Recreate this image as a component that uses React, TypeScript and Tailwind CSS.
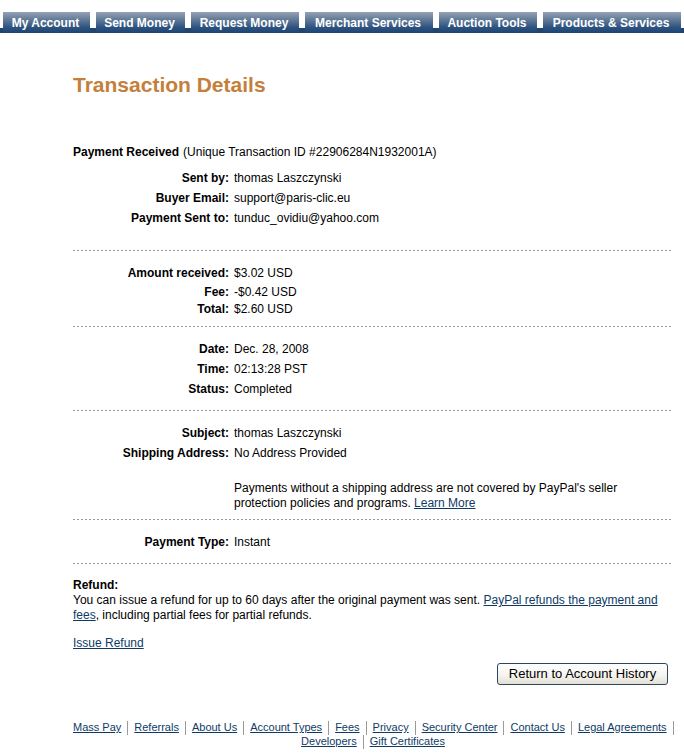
import React from "react";

const tabs = [
  { label: "My Account", w: "w-[87px]" },
  { label: "Send Money", w: "w-[89px]" },
  { label: "Request Money", w: "w-[108px]" },
  { label: "Merchant Services", w: "w-[128px]" },
  { label: "Auction Tools", w: "w-[98px]" },
  { label: "Products & Services", w: "w-[138px]" },
];

const footerLine1 = [
  "Mass Pay",
  "Referrals",
  "About Us",
  "Account Types",
  "Fees",
  "Privacy",
  "Security Center",
  "Contact Us",
  "Legal Agreements",
];
const footerLine2 = ["Developers", "Gift Certificates"];

function Dots() {
  return (
    <div className="h-px w-full bg-[linear-gradient(to_right,#9a9a9a_2px,transparent_2px)] bg-[length:4px_1px] bg-repeat-x" />
  );
}

function Row({ label, value, h = "h-5" }: { label: string; value: React.ReactNode; h?: string }) {
  return (
    <div className={`flex items-center ${h}`}>
      <div className="w-[156px] shrink-0 text-right font-bold">{label}</div>
      <div className="pl-[5px]">{value}</div>
    </div>
  );
}

function Pipe() {
  return <span className="mx-[6px] inline-block h-[14px] w-px bg-[#9a9a9a] align-middle" />;
}

function FLink({ children }: { children: React.ReactNode }) {
  return <a className="text-[#0e3b66] underline">{children}</a>;
}

export default function App() {
  return (
    <div className="min-h-[755px] bg-white text-[12px] text-black font-['Liberation_Sans',Arial,sans-serif]">
      {/* Tab bar */}
      <div className="mt-[12px] flex h-[21px] gap-[6px] pl-[3px] bg-[linear-gradient(to_bottom,transparent_16px,#1f4670_16px)]">
        {tabs.map((t) => (
          <div
            key={t.label}
            className={`${t.w} flex shrink-0 items-center justify-center pr-[2px] text-[12px] font-bold text-white bg-[linear-gradient(to_bottom,#93a3b6_0%,#5d7694_40%,#2a5180_75%,#1f4670_100%)]`}
          >
            {t.label}
          </div>
        ))}
      </div>

      <div className="ml-[73px] w-[600px]">
        <h1 className="mt-[40px] h-[24px] text-[21px] font-bold leading-[24px] text-[#c47f3c]">
          Transaction Details
        </h1>

        <div className="mt-[45px] flex h-5 items-center">
          <span className="font-bold">Payment Received</span>
          <span className="ml-1">(Unique Transaction ID #22906284N1932001A)</span>
        </div>

        <div className="mt-[6px]">
          <Row label="Sent by:" value="thomas Laszczynski" />
          <Row label="Buyer Email:" value="support@paris-clic.eu" />
          <Row label="Payment Sent to:" value="tunduc_ovidiu@yahoo.com" />
        </div>

        <div className="mt-[22px]">
          <Dots />
        </div>

        <div className="mt-[12px]">
          <Row label="Amount received:" value="$3.02 USD" />
          <Row label="Fee:" value="-$0.42 USD" h="h-[18px]" />
          <Row label="Total:" value="$2.60 USD" h="h-4" />
        </div>

        <div className="mt-[9px]">
          <Dots />
        </div>

        <div className="mt-[12px]">
          <Row label="Date:" value="Dec. 28, 2008" />
          <Row label="Time:" value="02:13:28 PST" />
          <Row label="Status:" value="Completed" />
        </div>

        <div className="mt-[11px]">
          <Dots />
        </div>

        <div className="mt-[12px]">
          <Row label="Subject:" value="thomas Laszczynski" />
          <Row label="Shipping Address:" value="No Address Provided" />
        </div>

        <div className="mt-[18px] pl-[161px] leading-[15px]">
          Payments without a shipping address are not covered by PayPal's seller
          <br />
          protection policies and programs. <FLink>Learn More</FLink>
        </div>

        <div className="mt-[8px]">
          <Dots />
        </div>

        <div className="mt-[12px]">
          <Row label="Payment Type:" value="Instant" />
        </div>

        <div className="mt-[11px]">
          <Dots />
        </div>

        <div className="mt-[14px] leading-[15px]">
          <div className="font-bold">Refund:</div>
          <div>
            You can issue a refund for up to 60 days after the original payment was sent.{" "}
            <FLink>PayPal refunds the payment and</FLink>
            <br />
            <FLink>fees</FLink>, including partial fees for partial refunds.
          </div>
        </div>

        <div className="mt-[13px] leading-[15px]">
          <FLink>Issue Refund</FLink>
        </div>

        <div className="mt-[12px] flex justify-end pr-[5px]">
          <button className="h-[22px] w-[171px] rounded-[3px] border border-[#2c4560] bg-[linear-gradient(to_bottom,#ffffff_0%,#f4f3ee_60%,#e2dfd3_100%)] text-[13px] leading-[20px] text-black">
            Return to Account History
          </button>
        </div>

        <div className="mt-[36px] w-[606px] whitespace-nowrap text-center text-[11px] leading-[13px]">
          <div>
            {footerLine1.map((f) => (
              <React.Fragment key={f}>
                <FLink>{f}</FLink>
                <Pipe />
              </React.Fragment>
            ))}
          </div>
          <div className="pr-[6px]">
            {footerLine2.map((f, i) => (
              <React.Fragment key={f}>
                {i > 0 && <Pipe />}
                <FLink>{f}</FLink>
              </React.Fragment>
            ))}
          </div>
        </div>
      </div>
    </div>
  );
}
